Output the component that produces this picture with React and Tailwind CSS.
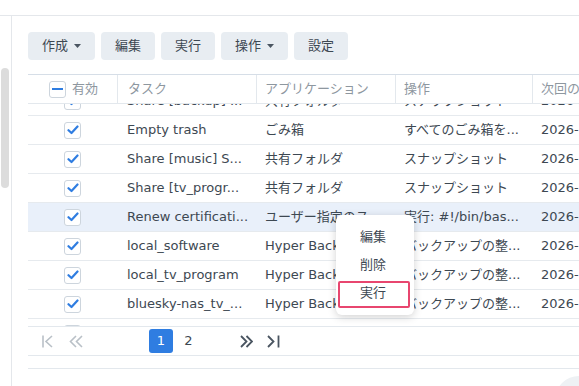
import React from 'react';

const rows = [
  { task: 'Share [backup] ...', app: '共有フォルダ', op: 'スナップショット' },
  { task: 'Empty trash', app: 'ごみ箱', op: 'すべてのごみ箱を...' },
  { task: 'Share [music] S...', app: '共有フォルダ', op: 'スナップショット' },
  { task: 'Share [tv_progr...', app: '共有フォルダ', op: 'スナップショット' },
  { task: 'Renew certificati...', app: 'ユーザー指定のス...', op: '実行: #!/bin/bas...', active: true },
  { task: 'local_software', app: 'Hyper Backup', op: 'バックアップの整...' },
  { task: 'local_tv_program', app: 'Hyper Backup', op: 'バックアップの整...' },
  { task: 'bluesky-nas_tv_...', app: 'Hyper Backup', op: 'バックアップの整...' },
  { task: 'local_photo', app: 'Hyper Backup', op: 'バックアップの整...' },
];

const Caret = () => (
  <svg width="7" height="4" viewBox="0 0 7 4" className="ml-[6px]">
    <path d="M0 0h7L3.5 4z" fill="#4a5561" />
  </svg>
);

const ToolButton = ({ children, caret }) => (
  <button className="h-7 px-[14px] rounded bg-[#e8edf2] flex items-center text-[13px] text-[#3d4852]">
    {children}
    {caret && <Caret />}
  </button>
);

const CheckBox = () => (
  <div className="w-[17px] h-[17px] rounded-[3px] border border-[#cdd5dd] bg-white flex items-center justify-center">
    <svg width="12" height="10" viewBox="0 0 12 10">
      <path d="M1.5 5.2l3 2.8 6-6.5" fill="none" stroke="#2f7de1" strokeWidth="2.2" strokeLinecap="round" strokeLinejoin="round" />
    </svg>
  </div>
);

const cols = 'grid grid-cols-[90px_139px_139px_137px_160px]';

export default function App() {
  return (
    <div className="relative w-[579px] h-[386px] overflow-hidden bg-white font-['DejaVu_Sans','Noto_Sans_CJK_JP',sans-serif]">
      <div className="h-4 border-b border-[#e4e7eb]" />
      <div className="flex h-[370px]">
        {/* left strip with scrollbar */}
        <div className="w-3 shrink-0 border-r border-[#e4e7eb]">
          <div className="mt-[52px] ml-px w-2 h-[120px] rounded-full bg-[#dcdcdc]" />
        </div>

        <div className="flex-1 overflow-hidden pl-4 pt-4">
          {/* toolbar */}
          <div className="flex gap-[6px]">
            <ToolButton caret>作成</ToolButton>
            <ToolButton>編集</ToolButton>
            <ToolButton>実行</ToolButton>
            <ToolButton caret>操作</ToolButton>
            <ToolButton>設定</ToolButton>
          </div>

          {/* table */}
          <div className="mt-[14px] w-[680px] border-t border-[#d6dee7]">
            <div className={`${cols} h-[29px] border-b border-[#e3e8ed] text-[13px] text-[#8e979f]`}>
              <div className="flex items-center pl-[21px] border-r border-[#e3e8ed]">
                <div className="w-[17px] h-[17px] rounded-[3px] border border-[#cdd5dd] bg-white flex items-center justify-center">
                  <div className="w-[11px] h-[2px] bg-[#2f7de1]" />
                </div>
                <span className="ml-[6px]">有効</span>
              </div>
              <div className="flex items-center pl-[10px] border-r border-[#e3e8ed]">タスク</div>
              <div className="flex items-center pl-2 border-r border-[#e3e8ed]">アプリケーション</div>
              <div className="flex items-center pl-2 border-r border-[#e3e8ed]">操作</div>
              <div className="flex items-center pl-2 whitespace-nowrap">次回の実行時間</div>
            </div>

            <div className="h-[223px] overflow-hidden border-b border-[#e3e8ed]">
              <div className="-mt-[17px]">
                {rows.map((r, i) => (
                  <div
                    key={i}
                    className={`${cols} h-[29px] border-b border-[#e6eaee] text-[13px] text-[#3d4852] whitespace-nowrap ${r.active ? 'bg-[#e9f0fa]' : ''}`}
                  >
                    <div className="flex items-center pl-9">
                      <CheckBox />
                    </div>
                    <div className="flex items-center pl-[9px]">{r.task}</div>
                    <div className="flex items-center pl-2">{r.app}</div>
                    <div className="flex items-center pl-2">{r.op}</div>
                    <div className="flex items-center pl-2">2026-01-18 03:00</div>
                  </div>
                ))}
              </div>
            </div>

            {/* pagination */}
            <div className="h-[29px] flex items-center border-b border-[#e3e8ed] text-[13px]">
              <svg width="11" height="13" viewBox="0 0 11 13" className="ml-[14px]">
                <path d="M1 0.5v12M10 1L4 6.5 10 12" fill="none" stroke="#b9c0c7" strokeWidth="1.6" />
              </svg>
              <svg width="14" height="13" viewBox="0 0 14 13" className="ml-[16px]">
                <path d="M7 1L1.5 6.5 7 12M13 1L7.5 6.5 13 12" fill="none" stroke="#b9c0c7" strokeWidth="1.6" />
              </svg>
              <div className="ml-[66px] w-6 h-6 rounded-[3px] bg-[#2f7de1] text-white flex items-center justify-center">1</div>
              <div className="ml-[10px] w-[11px] text-center text-[#3d4852]">2</div>
              <svg width="13" height="13" viewBox="0 0 13 13" className="ml-[46px]">
                <path d="M1 1l5.5 5.5L1 12M6.5 1L12 6.5 6.5 12" fill="none" stroke="#4a5561" strokeWidth="1.8" />
              </svg>
              <svg width="13" height="13" viewBox="0 0 13 13" className="ml-[14px]">
                <path d="M1 1l5.5 5.5L1 12M11.5 0.5v12" fill="none" stroke="#4a5561" strokeWidth="1.8" />
              </svg>
            </div>
            <div className="h-[13px] border-b border-[#e3e8ed]" />
          </div>
        </div>
      </div>

      {/* context menu */}
      <div className="absolute left-[336px] top-[215px] w-[78px] py-2 rounded-md bg-white shadow-[0_2px_8px_rgba(0,0,0,0.18)] text-[13px] text-[#3d4852]">
        <div className="h-7 flex items-center pl-6">編集</div>
        <div className="h-7 flex items-center pl-6">削除</div>
        <div className="h-7 flex items-center pl-6">実行</div>
      </div>
      <div className="absolute left-[338px] top-[281px] w-[72px] h-[27px] border-2 border-[#e8466f] rounded-[2px]" />

      {/* floating corner button */}
      <div className="absolute left-[555px] top-[376px] w-12 h-12 rounded-full bg-[#eef1f4]" />
    </div>
  );
}
